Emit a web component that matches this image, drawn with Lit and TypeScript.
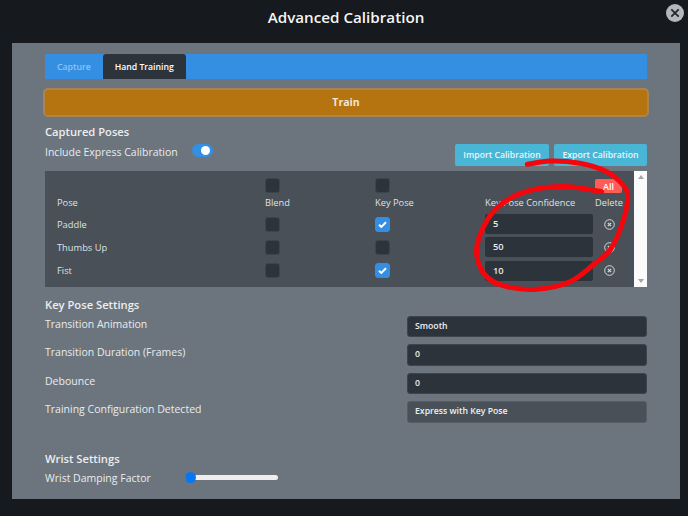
import { LitElement, html, css, svg } from "lit";
import { customElement } from "lit/decorators.js";

const poses = [
  { name: "Paddle", key: true, conf: "5" },
  { name: "Thumbs Up", key: false, conf: "50" },
  { name: "Fist", key: true, conf: "10" },
];
const settings = [
  { label: "Transition Animation", value: "Smooth", ro: false },
  { label: "Transition Duration (Frames)", value: "0", ro: false },
  { label: "Debounce", value: "0", ro: false },
  { label: "Training Configuration Detected", value: "Express with Key Pose", ro: true },
];
const inkPts: [number, number][] = [
  [527.3, 164.3], [550, 161], [580, 163.3], [606.7, 171.7], [623, 185], [627.7, 198],
  [621.7, 225], [610, 250], [593, 265], [570, 281.7], [536.7, 289.3], [503, 285.7],
  [485, 275], [476.7, 255], [480, 235], [493.3, 211.7], [513, 196.7], [540, 188.3],
  [570, 186.7], [601.7, 191.7],
];
function smooth(p: [number, number][]) {
  let d = `M${p[0][0]} ${p[0][1]}`;
  for (let i = 0; i < p.length - 1; i++) {
    const a = p[Math.max(i - 1, 0)], b = p[i], c = p[i + 1], e = p[Math.min(i + 2, p.length - 1)];
    d += ` C${(b[0] + (c[0] - a[0]) / 6).toFixed(1)} ${(b[1] + (c[1] - a[1]) / 6).toFixed(1)} ${(c[0] - (e[0] - b[0]) / 6).toFixed(1)} ${(c[1] - (e[1] - b[1]) / 6).toFixed(1)} ${c[0]} ${c[1]}`;
  }
  return d;
}

@customElement("app-root")
export class AppRoot extends LitElement {
  static styles = css`
    :host { display: block; width: 688px; height: 516px; overflow: hidden; position: relative; background: #16191d; font-family: "Open Sans", "Noto Sans", sans-serif; font-size: 10.5px; color: #e9ecef; }
    * { box-sizing: border-box; }
    .head { height: 43px; display: flex; align-items: center; justify-content: center; padding: 0 0 9px 4px; font-size: 15.2px; font-weight: 600; color: #f4f5f6; }
    .close { position: absolute; left: 666px; top: 4px; width: 18px; height: 18px; }
    .panel { margin: 0 8px 0 12px; height: 456px; background: #6c757d; padding: 11px 33px 0; display: flex; flex-direction: column; }
    .tabs { height: 25px; background: #348fe2; display: flex; font-size: 8.7px; font-weight: 600; flex: none; }
    .tab { display: flex; align-items: center; padding: 0 12px; color: #8fc3f0; }
    .tab.on { background: #2d333b; color: #fff; border-radius: 3px 3px 0 0; }
    .train { flex: none; margin-top: 10.5px; height: 25px; padding-bottom: 1px; background: #b57410; border-radius: 3px; box-shadow: 0 0 0 2px #a98550; display: flex; align-items: center; justify-content: center; font-weight: 700; color: #f1e6d4; }
    h3 { margin: 0; font-size: 11.2px; font-weight: 600; line-height: 16px; color: #eceef0; }
    .cap { margin-top: 9.5px; }
    .row1 { height: 25px; margin-top: 1px; display: flex; align-items: flex-start; position: relative; }
    .row1 .lbl { line-height: 18px; margin-top: 2px; width: 147px; }
    .toggle { width: 21px; height: 13px; border-radius: 7px; background: #348fe2; margin-top: 3px; position: relative; }
    .toggle::after { content: ""; position: absolute; right: 3px; top: 2px; width: 9px; height: 9px; border-radius: 50%; background: #fff; }
    .btns { margin-left: auto; display: flex; gap: 5px; margin-top: 3px; }
    .btn { height: 22px; background: #49b6d6; border-radius: 2px; display: flex; align-items: center; justify-content: center; font-size: 8.7px; font-weight: 600; color: #e9f5f9; }
    .btn.a { width: 94px; } .btn.b { width: 93px; }
    .tablewrap { flex: none; height: 116px; margin-top: 5px; display: flex; }
    .table { flex: 1; background: #495057; padding: 7px 0 0 12px; display: grid; grid-template-columns: 208px 110px 110px 110px 1fr; grid-template-rows: 15px 19.4px 23.3px 23.3px 23.3px; align-items: center; color: #dfe3e6; font-size: 9.3px; }
    .sb { width: 13px; background: #fbfbfb; display: flex; flex-direction: column; justify-content: space-between; align-items: center; padding: 4px 0; }
    .ar { width: 0; height: 0; border-left: 3.5px solid transparent; border-right: 3.5px solid transparent; }
    .ar.u { border-bottom: 4px solid #a2a6aa; } .ar.d { border-top: 4px solid #a2a6aa; }
    .cb { width: 15px; height: 15px; border-radius: 3px; background: #2d333b; border: 1px solid #3d444c; display: block; }
    .cb.on { background: #348fe2; border-color: #348fe2; }
    .cb svg { display: block; width: 13px; height: 13px; }
    .conf { width: 108px; height: 20px; border-radius: 2px; background: #2d333b; padding-left: 8px; line-height: 20px; font-weight: 600; color: #e9ecef; }
    .all { justify-self: start; width: 27px; height: 14px; margin-top: 1px; border-radius: 2px; background: #ff5b57; color: #fff; font-size: 9px; font-weight: 600; display: flex; align-items: center; justify-content: center; }
    .del { width: 11px; height: 11px; margin-left: 9px; display: block; }
    .kps { margin-top: 9.5px; }
    .form { margin-top: 3.5px; display: flex; flex-direction: column; }
    .frow { display: flex; justify-content: space-between; align-items: flex-start; height: 28.4px; }
    .frow .lbl { line-height: 16px; }
    .field { width: 240px; height: 21.4px; border-radius: 3px; background: #2d333b; border: 1px solid #3d444c; padding-left: 7px; line-height: 19px; font-size: 8.7px; font-weight: 600; color: #eef0f2; }
    .field.ro { background: #495057; border-color: #565d64; }
    .wrist { margin-top: 21px; }
    .wrow { margin-top: 3px; display: flex; align-items: center; height: 16px; }
    .wrow .lbl { width: 140px; }
    .slider { width: 93px; height: 5px; background: #eeeeee; border-radius: 3px; position: relative; }
    .slider::before { content: ""; position: absolute; left: 0; top: -3px; width: 11px; height: 11px; border-radius: 50%; background: #0a75f0; }
    .ink { position: absolute; left: 0; top: 0; width: 688px; height: 516px; pointer-events: none; }
  `;

  private cb(on: boolean) {
    return html`<span class="cb ${on ? "on" : ""}">${on
      ? html`<svg viewBox="0 0 13 13"><path d="M3 6.7 5.3 8.9 10 4.2" fill="none" stroke="#fff" stroke-width="2"/></svg>`
      : ""}</span>`;
  }

  private del() {
    return svg`<svg class="del" viewBox="0 0 11 11"><circle cx="5.5" cy="5.5" r="4.8" fill="none" stroke="#d5d8db" stroke-width="1"/><path d="M3.8 3.8 7.2 7.2M7.2 3.8 3.8 7.2" stroke="#d5d8db" stroke-width="1.2"/></svg>`;
  }

  render() {
    return html`
      <div class="head">Advanced Calibration</div>
      <svg class="close" viewBox="0 0 18 18"><circle cx="9" cy="9" r="9" fill="#b4b7bb"/><path d="M5.3 5.3 12.7 12.7M12.7 5.3 5.3 12.7" stroke="#24282c" stroke-width="1.8"/></svg>
      <div class="panel">
        <div class="tabs"><div class="tab">Capture</div><div class="tab on">Hand Training</div></div>
        <div class="train">Train</div>
        <h3 class="cap">Captured Poses</h3>
        <div class="row1">
          <div class="lbl">Include Express Calibration</div>
          <div class="toggle"></div>
          <div class="btns"><div class="btn a">Import Calibration</div><div class="btn b">Export Calibration</div></div>
        </div>
        <div class="tablewrap">
          <div class="table">
            <span></span>${this.cb(false)}${this.cb(false)}<span></span><div class="all">All</div>
            <span>Pose</span><span>Blend</span><span>Key Pose</span><span>Key Pose Confidence</span><span>Delete</span>
            ${poses.map(
              (p) => html`<span>${p.name}</span>${this.cb(false)}${this.cb(p.key)}<div class="conf">${p.conf}</div>${this.del()}`
            )}
          </div>
          <div class="sb"><span class="ar u"></span><span class="ar d"></span></div>
        </div>
        <h3 class="kps">Key Pose Settings</h3>
        <div class="form">
          ${settings.map(
            (s) => html`<div class="frow"><span class="lbl">${s.label}</span><div class="field ${s.ro ? "ro" : ""}">${s.value}</div></div>`
          )}
        </div>
        <h3 class="wrist">Wrist Settings</h3>
        <div class="wrow"><span class="lbl">Wrist Damping Factor</span><div class="slider"></div></div>
      </div>
      <svg class="ink" viewBox="0 0 688 516"><path d="${smooth(inkPts)}" fill="none" stroke="#f5060c" stroke-width="5" stroke-linecap="round" stroke-linejoin="round"/></svg>
    `;
  }
}
